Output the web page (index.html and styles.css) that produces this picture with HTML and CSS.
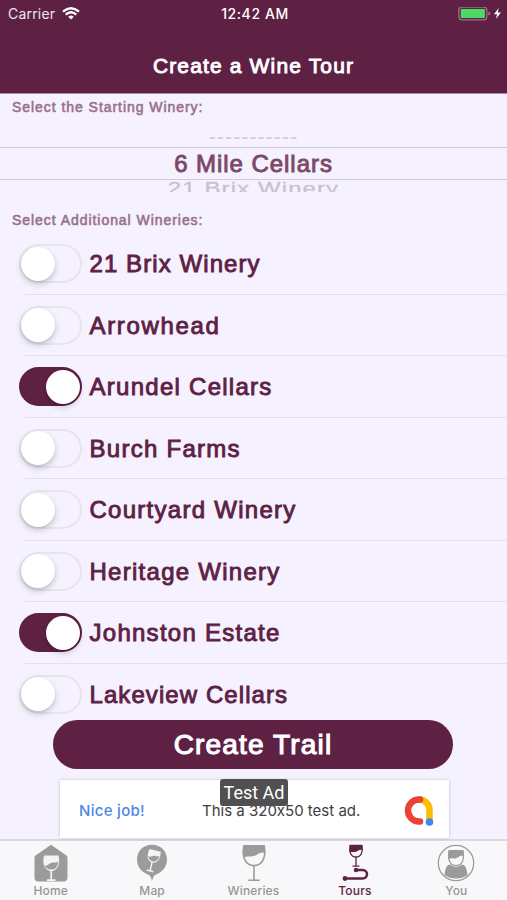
FILE: index.html
```html
<!DOCTYPE html>
<html lang="en">
<head>
<meta charset="utf-8">
<title>Create a Wine Tour</title>
<link rel="stylesheet" href="styles.css">
</head>
<body>
<div class="app">
  <header class="header">
    <div class="status">
      <div class="carrier"><span>Carrier</span>
        <svg class="wifi" width="18" height="13" viewBox="0 0 18 13" fill="none" stroke="#fff" stroke-width="2.3"><path d="M1 4.6Q9-2.2 17 4.6M3.7 7.6Q9 3 14.3 7.6"/><path d="M6.2 9.7Q9 7.5 11.8 9.7L9 12.6Z" fill="#fff" stroke="none"/></svg>
      </div>
      <div class="time">12:42 AM</div>
      <svg class="battery" width="44" height="14" viewBox="0 0 44 14"><rect x=".8" y=".2" width="28" height="12.6" rx="3" fill="none" stroke="#9b7089" stroke-width="1.3"/><rect x="2.7" y="2" width="24.2" height="9" rx="1" fill="#4cd964"/><path d="M30.3 4.500q2 .4 2 2t-2 2z" fill="#9b7089"/><path d="M40.700 1L36 7.200h3.100l-1.200 4.800 5-6.400h-3.200z" fill="#fff"/></svg>
    </div>
    <h1 class="title">Create a Wine Tour</h1>
  </header>
  <main class="main">
    <h2 class="caption">Select the Starting Winery:</h2>
    <div class="picker">
      <div class="option above">-----------</div>
      <div class="option selected">6 Mile Cellars</div>
      <div class="option below"><div class="tilt">21 Brix Winery</div></div>
    </div>
    <h2 class="caption second">Select Additional Wineries:</h2>
    <div class="list">
      <div class="row"><span class="switch"></span><span class="name">21 Brix Winery</span></div>
      <div class="row"><span class="switch"></span><span class="name wider">Arrowhead</span></div>
      <div class="row"><span class="switch on"></span><span class="name wide">Arundel Cellars</span></div>
      <div class="row"><span class="switch"></span><span class="name wide">Burch Farms</span></div>
      <div class="row"><span class="switch"></span><span class="name wide">Courtyard Winery</span></div>
      <div class="row"><span class="switch"></span><span class="name wide">Heritage Winery</span></div>
      <div class="row"><span class="switch on"></span><span class="name wide">Johnston Estate</span></div>
      <div class="row"><span class="switch"></span><span class="name">Lakeview Cellars</span></div>
    </div>
    <button class="create">Create Trail</button>
    <div class="ad">
      <span class="nice">Nice job!</span>
      <span class="adtext">This a 320x50 test ad.</span>
      <svg class="admob" width="32" height="32" viewBox="0 0 32 32" fill="none" stroke-width="6.500" stroke-linecap="round"><path d="M16.500 4.500A10.500 10.500 0 0 1 26.500 15V26" stroke="#fbbc04"/><path d="M17 4.500H16A11 11 0 0 0 16 26.500H17" stroke="#ea4335"/><circle cx="26.500" cy="27" r="3.800" fill="#4285f4"/></svg>
      <span class="badge">Test Ad</span>
    </div>
  </main>
  <nav class="tabs">
    <div class="tab"><svg width="38" height="38" viewBox="0 0 38 38"><path d="M19 .8L34.500 11.500Q35.500 12.200 35.500 14V33.500Q35.500 37.500 31.500 37.500H6.500Q2.500 37.500 2.500 33.500V14Q2.500 12.200 3.500 11.500Z" fill="#9b9b9b"/><path d="M12 11.500H26.500C28.500 20 25.500 27 19.200 27S10 20 12 11.500Z" fill="#f4f3f5"/><path d="M12.500 21.500C16 22.500 17.500 18.500 20.500 18.500S23.500 19 26 17.500C26 22 24 25.500 19.200 25.500C15.500 25.500 13.500 23.500 12.500 21.500Z" fill="#9b9b9b"/><path d="M19.200 26V36M15 36.200H23.500" stroke="#f4f3f5" stroke-width="1.700"/></svg><span>Home</span></div>
    <div class="tab"><svg width="38" height="38" viewBox="0 0 38 38"><path d="M19 .8C10 .8 4 7.500 4 15.500C4 23 9 28.500 15 30.500Q18 31.500 19 37.500Q20 31.500 23 30.500C29 28.500 34 23 34 15.500C34 7.500 28 .8 19 .8Z" fill="#9b9b9b"/><g transform="rotate(14 20 14)"><path d="M14.500 6H26C27.500 13 25.500 18.500 20.200 18.500S13 13 14.500 6Z" fill="#f4f3f5"/><path d="M15 13.500C18 14 19 11.500 21 11.500S23.500 12 25.700 10.500C25.700 14.500 24 17.300 20.200 17.300C17.500 17.300 15.700 15.500 15 13.500Z" fill="#9b9b9b"/><path d="M20.200 18V27M16.700 27.200H23.700" stroke="#f4f3f5" stroke-width="1.500"/></g></svg><span>Map</span></div>
    <div class="tab"><svg width="38" height="38" viewBox="0 0 38 38" fill="none" stroke="#9b9b9b" stroke-width="1.600"><path d="M8.900 1.800H29.100C31.500 13 27.500 21.500 19 21.500S6.500 13 8.900 1.800Z"/><path d="M8.500 1.800H29.500L30 9C25 7 22.500 11 19 12S12 11.500 8.500 13.500Z" fill="#9b9b9b" stroke="none"/><path d="M19 21.500V36M13.300 36.300H24.700"/></svg><span>Wineries</span></div>
    <div class="tab active"><svg width="38" height="38" viewBox="0 0 38 38" fill="none" stroke="#5e2144" stroke-width="1.300"><path d="M14.100 1.500H25.900C27.300 8 25 13 20 13S12.700 8 14.100 1.500Z"/><path d="M13.800 1.500H26.200L26.600 6C23.500 5 22 7.300 20 7.800S16 7.500 13.600 8.300Z" fill="#5e2144" stroke="none"/><path d="M20 13V22M16.500 22.200H23.500"/><path d="M20 26H26.500C32.500 26 32.500 34.500 26.500 34.500H9" stroke-width="2.500"/><circle cx="20" cy="26" r="1.600" fill="#5e2144"/><circle cx="9" cy="34.500" r="1.800" fill="#5e2144"/></svg><span>Tours</span></div>
    <div class="tab"><svg width="38" height="38" viewBox="0 0 38 38"><circle cx="19" cy="19" r="17.700" fill="none" stroke="#9b9b9b" stroke-width="1.300"/><path d="M12.500 20.500Q19 25 25.500 20.500C29 21.500 30 26 30.500 31Q25.500 34.500 19 34.500T7.500 31C8 26 9 21.500 12.500 20.500Z" fill="#9b9b9b"/><path d="M12 6.500H26C27.500 15 25.500 21.500 19 21.500S10.500 15 12 6.500Z" fill="#f8f7f9" stroke="#9b9b9b" stroke-width="1.200"/><path d="M12 6H26L26.700 12C23 11 21.500 13.500 19 14.200S14.500 13.500 11.600 15Z" fill="#9b9b9b"/></svg><span>You</span></div>
  </nav>
</div>
</body>
</html>
```
FILE: styles.css
```css
* { box-sizing: border-box; }
body { margin: 0; background: #f5f1ff; }
.app {
  width: 507px; height: 900px; display: flex; flex-direction: column;
  overflow: hidden; color: #5e2144; font-family: "Liberation Sans", Arial, sans-serif;
}
.header { height: 94px; flex: none; background: #5e2144; color: #fff; border-bottom: 1px solid #a98da0; }
.status {
  height: 28px; padding: 0 5px 0 8px; display: grid; grid-template-columns: 1fr auto 1fr;
  align-items: center; font-family: Inter, sans-serif; font-size: 14px;
}
.carrier { display: flex; align-items: center; gap: 7px; color: #eee5ed; letter-spacing: .2px; margin-top: -2px; }
.time { font-weight: 500; font-size: 14px; letter-spacing: .6px; margin-top: -1px; }
.battery { justify-self: end; }
.title {
  margin: 25px 0 0; text-align: center; font-size: 21px; line-height: 26px;
  font-weight: 400; letter-spacing: 1.15px; -webkit-text-stroke: .9px currentColor;
}
.main { height: 745px; flex: none; display: flex; flex-direction: column; }
.caption {
  margin: 3px 0 0 12px; height: 21px; line-height: 20px; font-size: 14px; font-weight: 400;
  letter-spacing: .95px; color: #987089; -webkit-text-stroke: .55px currentColor;
}
.picker { height: 74px; overflow: hidden; text-align: center; font-size: 24px; -webkit-text-stroke: .9px currentColor; }
.option { letter-spacing: .95px; }
.above { height: 29px; line-height: 38px; color: #d1c8d8; font-size: 21px; letter-spacing: 1.15px; -webkit-text-stroke: 0; }
.selected { height: 33px; line-height: 32px; color: #7c4967; border: solid #d0cbd8; border-width: 1px 0; }
.below { height: 12px; overflow: hidden; color: #cabfd1; letter-spacing: 1.1px; -webkit-text-stroke: .4px currentColor; }
.tilt { line-height: 24px; transform: scaleY(.72); transform-origin: 50% 0; }
.caption.second { margin-top: 18px; height: 20px; }
.list { height: 490px; flex: none; overflow: hidden; padding-top: 3px; }
.row {
  height: 61.5px; display: flex; align-items: center; gap: 7.5px; padding-left: 19px;
  background: linear-gradient(#e5dfeb, #e5dfeb) 25px 100% / 100% 1px no-repeat;
}
.switch { width: 63px; height: 39px; border: 2px solid #e8e5ea; border-radius: 20px; display: flex; align-items: center; }
.switch::before {
  content: ""; width: 34px; height: 34px; border-radius: 50%; background: #fff;
  box-shadow: 0 3px 6px #00000030, 0 1px 2px #00000015;
}
.switch.on { background: #5e2144; border-color: #5e2144; justify-content: flex-end; }
.name { font-size: 24px; line-height: 30px; letter-spacing: 1.08px; white-space: nowrap; -webkit-text-stroke: .9px currentColor; padding-top: 1px; }
.wide { letter-spacing: 1.27px; }
.wider { letter-spacing: 1.65px; }
.create {
  width: 400px; height: 49px; margin: 0 0 0 53px; padding: 0; border: 0; border-radius: 25px;
  background: #5e2144; color: #fff; font: 400 28px "Liberation Sans", Arial, sans-serif;
  letter-spacing: 1.15px; -webkit-text-stroke: 1.1px currentColor; flex: none;
}
.ad {
  position: relative; width: 389px; height: 58px; margin: 11px 0 0 60px; padding: 3px 14px 0 19px;
  display: flex; align-items: center; background: #fff; box-shadow: 0 0 3px #00000038;
  font: 15px Inter, sans-serif; font-feature-settings: "calt" 0; flex: none;
}
.nice { width: 123px; color: #4e87e8; font-weight: 500; letter-spacing: .3px; }
.adtext { flex: 1; color: #404040; white-space: nowrap; }
.badge {
  position: absolute; left: 160px; top: -1px; width: 68px; height: 27px; border-radius: 3px;
  background: #505050; color: #fff; text-align: center; font: 18px/27px Roboto, sans-serif;
}
.tabs { height: 61px; flex: none; display: flex; background: #f8f7f9; border-top: 2px solid #dbd8df; }
.tab {
  flex: 1; display: flex; flex-direction: column; align-items: center; padding-top: 3px;
  color: #969696; font: 500 12px/18px Inter, sans-serif; letter-spacing: .15px;
}
.tab svg { flex: none; }
.active { color: #5e2144; }
```
